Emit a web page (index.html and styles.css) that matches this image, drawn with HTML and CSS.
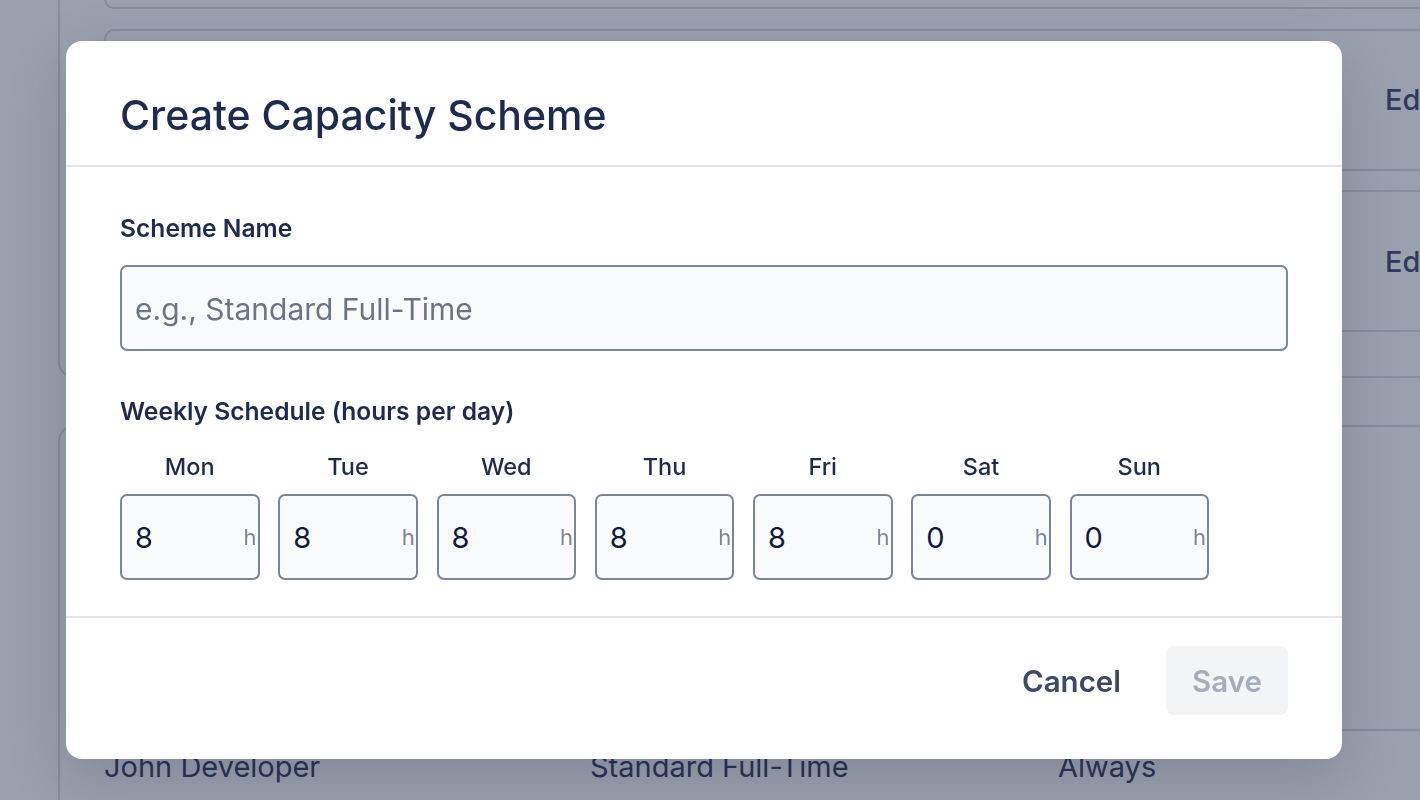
FILE: index.html
```html
<!doctype html>
<html lang="en">
    <head>
        <meta charset="UTF-8" />
        <meta name="viewport" content="width=device-width, initial-scale=1.0" />
        <title>Capacity Schemes</title>
        <link rel="stylesheet" href="styles.css">
    </head>
    <body>
        <div class="page">
            <section class="panel">
                <div class="scheme-card">
                    <div class="scheme-info">
                        <span class="scheme-name">Part-Time</span>
                        <span class="scheme-hours">20h / week</span>
                    </div>
                    <span class="card-action">Edit</span>
                </div>
                <div class="scheme-card">
                    <div class="scheme-info">
                        <span class="scheme-name">Standard Full-Time</span>
                        <span class="scheme-hours">40h / week</span>
                    </div>
                    <span class="card-action">Edit</span>
                </div>
                <div class="scheme-card">
                    <div class="scheme-info">
                        <span class="scheme-name">Four Day Week</span>
                        <span class="scheme-hours">32h / week</span>
                    </div>
                    <span class="card-action">Edit</span>
                </div>
            </section>
            <section class="panel panel-table">
                <h2 class="panel-title">Assignments</h2>
                <div class="table-row table-head">
                    <span class="col-user">User</span>
                    <span class="col-scheme">Scheme</span>
                    <span class="col-period">Period</span>
                </div>
                <div class="table-row">
                    <span class="col-user">John Developer</span>
                    <span class="col-scheme">Standard Full-Time</span>
                    <span class="col-period">Always</span>
                </div>
            </section>
        </div>

        <div class="overlay">
            <div class="modal">
                <div class="modal-header">
                    <h1 class="modal-title">Create Capacity Scheme</h1>
                </div>
                <div class="modal-body">
                    <label class="field-label" for="scheme-name">Scheme Name</label>
                    <input id="scheme-name" class="text-input" type="text" placeholder="e.g., Standard Full-Time">

                    <div class="field-label schedule-label">Weekly Schedule (hours per day)</div>
                    <div class="days">
                        <div class="day">
                            <span class="day-name">Mon</span>
                            <div class="hours-box"><span class="hours-value">8</span><span class="hours-unit">h</span></div>
                        </div>
                        <div class="day">
                            <span class="day-name">Tue</span>
                            <div class="hours-box"><span class="hours-value">8</span><span class="hours-unit">h</span></div>
                        </div>
                        <div class="day">
                            <span class="day-name">Wed</span>
                            <div class="hours-box"><span class="hours-value">8</span><span class="hours-unit">h</span></div>
                        </div>
                        <div class="day">
                            <span class="day-name">Thu</span>
                            <div class="hours-box"><span class="hours-value">8</span><span class="hours-unit">h</span></div>
                        </div>
                        <div class="day">
                            <span class="day-name">Fri</span>
                            <div class="hours-box"><span class="hours-value">8</span><span class="hours-unit">h</span></div>
                        </div>
                        <div class="day">
                            <span class="day-name">Sat</span>
                            <div class="hours-box"><span class="hours-value">0</span><span class="hours-unit">h</span></div>
                        </div>
                        <div class="day">
                            <span class="day-name">Sun</span>
                            <div class="hours-box"><span class="hours-value">0</span><span class="hours-unit">h</span></div>
                        </div>
                    </div>
                </div>
                <div class="modal-footer">
                    <button class="btn-cancel">Cancel</button>
                    <button class="btn-save" disabled>Save</button>
                </div>
            </div>
        </div>
    </body>
</html>
```

FILE: styles.css
```css
html,
body {
    margin: 0;
    overflow: hidden;
    height: 100%;
}
body {
    font-family: Inter, "Noto Sans", sans-serif;
    background-color: #ffffff;
    color: #1c2b4f;
}

/* page behind the dialog, scrolled down a bit */
.page {
    box-sizing: border-box;
    width: 1540px;
    margin-top: -179px;
    padding-left: 58px;
    display: flex;
    flex-direction: column;
    gap: 47px;
}
.panel {
    background: #ffffff;
    border: 2px solid #d2d5dc;
    border-radius: 16px;
    padding: 44px;
    display: flex;
    flex-direction: column;
    gap: 19.5px;
}
.scheme-card {
    box-sizing: border-box;
    height: 142px;
    border: 2px solid #d2d5dc;
    border-radius: 10px;
    display: flex;
    align-items: center;
    justify-content: space-between;
    padding: 0 27px 0 30px;
}
.scheme-info {
    display: flex;
    flex-direction: column;
    gap: 6px;
}
.scheme-name {
    font-size: 27px;
    font-weight: 600;
}
.scheme-hours {
    font-size: 22px;
    color: #4b5563;
}
.card-action {
    font-size: 29px;
    font-weight: 500;
    color: #26335c;
    width: 80px;
}
.panel-title {
    margin: 0 0 146px;
    font-size: 30px;
    line-height: 36px;
    font-weight: 600;
}
.panel-table {
    gap: 0;
}
.table-row {
    display: flex;
    font-size: 29px;
    line-height: 32px;
    padding: 20px 0 24px;
    color: #172550;
}
.table-head {
    border-bottom: 2px solid #d2d5dc;
    font-size: 22px;
    font-weight: 600;
    color: #4b5563;
}
.col-user {
    width: 486px;
}
.col-scheme {
    width: 468px;
}

/* dialog */
.overlay {
    position: fixed;
    inset: 0;
    background: rgba(53, 67, 93, 0.5);
    padding: 41px 0 0 66px;
}
.modal {
    width: 1276px;
    background: #ffffff;
    border-radius: 16px;
    box-shadow: 0 20px 60px rgba(15, 23, 42, 0.18);
}
.modal-header {
    padding: 50px 54px 26px;
    border-bottom: 2px solid #e3e5ea;
}
.modal-title {
    margin: 0;
    font-size: 41px;
    line-height: 48px;
    font-weight: 500;
    color: #1c2b4f;
}
.modal-body {
    padding: 45px 54px 36px;
    display: flex;
    flex-direction: column;
}
.field-label {
    font-size: 24.6px;
    line-height: 33px;
    font-weight: 600;
    color: #1c2b4f;
}
.text-input {
    margin-top: 20px;
    height: 86px;
    box-sizing: border-box;
    border: 2px solid #7b8599;
    border-radius: 7px;
    background: #f8fafc;
    padding: 2px 13px 0;
    font-family: inherit;
    font-size: 30px;
    color: #0f1b3d;
}
.text-input::placeholder {
    color: #6b7588;
}
.schedule-label {
    margin-top: 44px;
}
.days {
    margin-top: 22px;
    display: grid;
    grid-template-columns: repeat(7, 139.5px);
    column-gap: 18.75px;
}
.day {
    display: flex;
    flex-direction: column;
    align-items: center;
}
.day-name {
    font-size: 23.5px;
    line-height: 33px;
    font-weight: 500;
    color: #1c2b4f;
    margin-bottom: 11px;
}
.hours-box {
    position: relative;
    width: 100%;
    height: 86px;
    box-sizing: border-box;
    border: 2px solid #7b8599;
    border-radius: 7px;
    background: #f8fafc;
    display: flex;
    align-items: center;
    padding: 0 13px;
}
.hours-value {
    font-size: 29px;
    color: #0f1b3d;
}
.hours-unit {
    position: absolute;
    right: 1px;
    top: 50%;
    transform: translateY(-50%);
    font-size: 22px;
    color: #7d8699;
}
.modal-footer {
    border-top: 2px solid #e3e5ea;
    padding: 28px 54px 44px;
    display: flex;
    justify-content: flex-end;
    align-items: center;
    gap: 45px;
}
button {
    font-family: inherit;
    font-size: 29.5px;
    font-weight: 600;
    border: none;
    border-radius: 8px;
    cursor: pointer;
}
.btn-cancel {
    background: none;
    color: #3d4a66;
    padding: 0;
}
.btn-save {
    background: #f3f4f6;
    color: #a5acba;
    width: 122px;
    height: 69px;
}
```
